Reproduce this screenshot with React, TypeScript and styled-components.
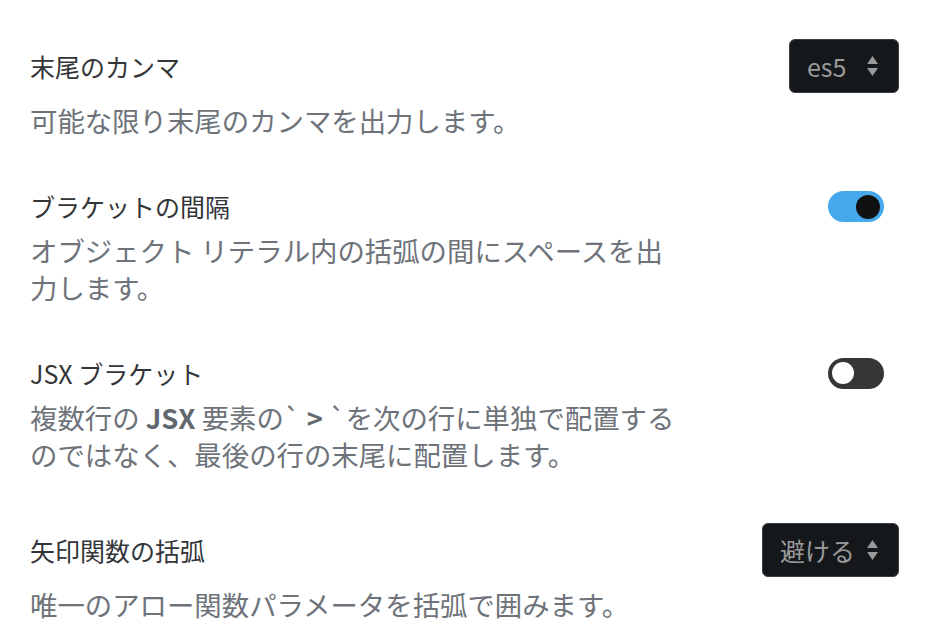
import React from "react";
import styled, { createGlobalStyle } from "styled-components";

const Global = createGlobalStyle`
  html, body { margin: 0; padding: 0; background: #ffffff; }
  body { font-family: "Noto Sans CJK JP", "Noto Sans", sans-serif; }
`;

const Page = styled.div`
  display: flex;
  flex-direction: column;
  gap: 50px;
  padding: 39px 43px 0 30px;
`;

const Item = styled.section`
  display: flex;
  flex-direction: column;
  gap: 9px;
`;

const Header = styled.div`
  display: flex;
  align-items: center;
  justify-content: space-between;
  min-height: 34px;
`;

const Title = styled.div`
  font-size: 25px;
  line-height: 34px;
  color: #333538;
`;

const Desc = styled.div`
  font-size: 27.4px;
  line-height: 37px;
  color: #6e737a;
  max-width: 650px;
  b { font-weight: 700; color: #62666d; }
`;

const Select = styled.div<{ $width: number }>`
  display: flex;
  align-items: center;
  justify-content: space-between;
  width: ${(p) => p.$width}px;
  height: 54px;
  box-sizing: border-box;
  padding: 0 20px 0 17px;
  background: #15181b;
  border: 1px solid #3b3e42;
  border-radius: 6px;
  color: #9a9a9a;
  font-size: 25px;
`;

const Toggle = styled.div<{ $on: boolean }>`
  position: relative;
  width: 56px;
  height: 31px;
  margin-right: 15px;
  border-radius: 16px;
  background: ${(p) => (p.$on ? "#45a8ed" : "#363636")};
`;

const Knob = styled.div<{ $on: boolean }>`
  position: absolute;
  top: ${(p) => (p.$on ? "4px" : "4.5px")};
  left: ${(p) => (p.$on ? "28px" : "4px")};
  width: ${(p) => (p.$on ? "24px" : "22px")};
  height: ${(p) => (p.$on ? "24px" : "22px")};
  border-radius: 50%;
  background: ${(p) => (p.$on ? "#111111" : "#ffffff")};
`;

const Arrows = () => (
  <svg width="11" height="20" viewBox="0 0 11 20">
    <path d="M5.5 0 L11 8 H0 Z" fill="#9a9a9a" />
    <path d="M5.5 20 L11 12 H0 Z" fill="#9a9a9a" />
  </svg>
);

export default function App() {
  return (
    <>
      <Global />
      <Page>
        <Item>
          <Header>
            <Title>末尾のカンマ</Title>
            <Select $width={110}>
              <span>es5</span>
              <Arrows />
            </Select>
          </Header>
          <Desc>可能な限り末尾のカンマを出力します。</Desc>
        </Item>
        <Item>
          <Header>
            <Title>ブラケットの間隔</Title>
            <Toggle $on={true}>
              <Knob $on={true} />
            </Toggle>
          </Header>
          <Desc>オブジェクト リテラル内の括弧の間にスペースを出力します。</Desc>
        </Item>
        <Item>
          <Header>
            <Title>JSX ブラケット</Title>
            <Toggle $on={false}>
              <Knob $on={false} />
            </Toggle>
          </Header>
          <Desc>
            複数行の <b>JSX</b> 要素の`<b> &gt; </b>`を次の行に単独で配置するのではなく、最後の行の末尾に配置します。
          </Desc>
        </Item>
        <Item>
          <Header>
            <Title>矢印関数の括弧</Title>
            <Select $width={137}>
              <span>避ける</span>
              <Arrows />
            </Select>
          </Header>
          <Desc>唯一のアロー関数パラメータを括弧で囲みます。</Desc>
        </Item>
      </Page>
    </>
  );
}
